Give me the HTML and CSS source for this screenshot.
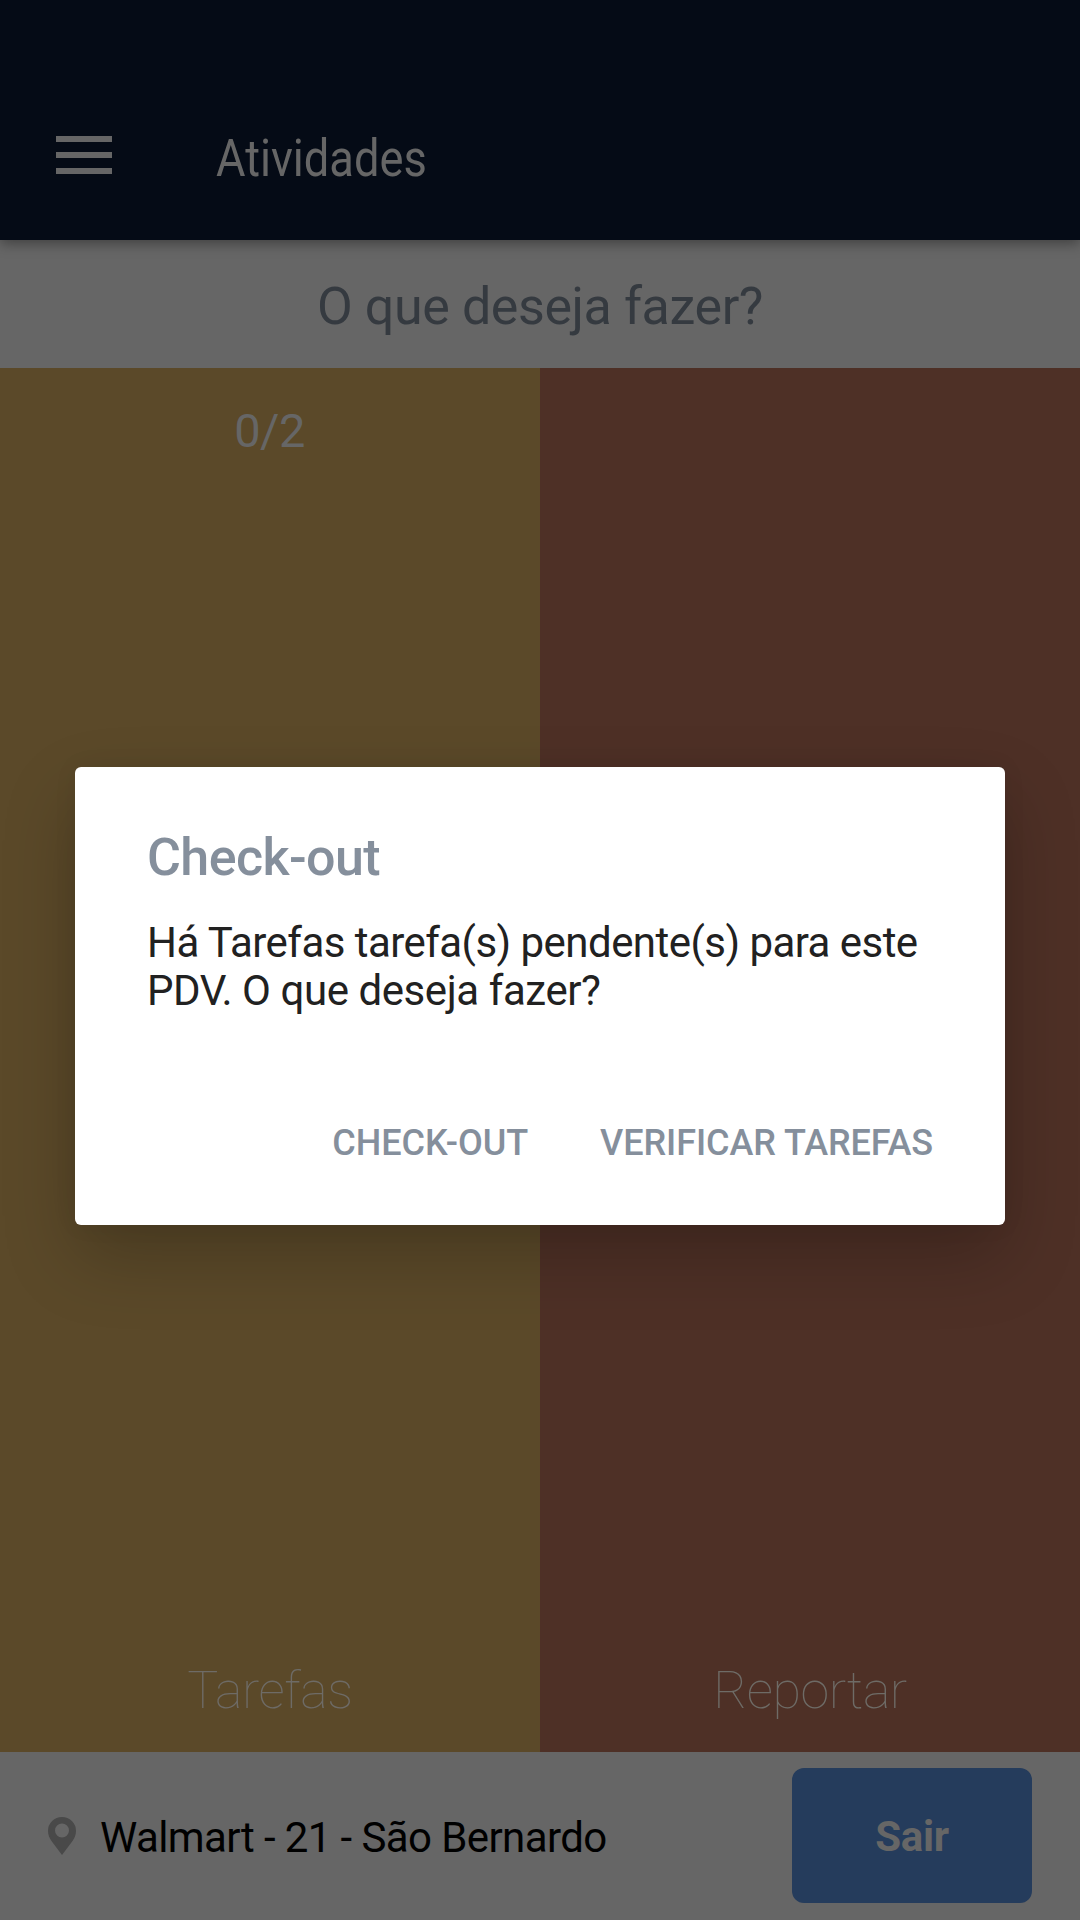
FILE: index.html
```html
<!DOCTYPE html>
<html lang="pt-BR">
<head>
<meta charset="utf-8">
<title>Atividades</title>
<link rel="stylesheet" href="styles.css">
</head>
<body>
<div class="screen">
  <header class="app-bar">
    <svg class="menu" viewBox="0 0 56 38"><path d="M0 0h56v6H0zM0 16h56v6H0zM0 32h56v6H0z"/></svg>
    <h1><span class="condensed">Atividades</span></h1>
  </header>
  <div class="question"><span>O que deseja fazer?</span></div>
  <main class="tiles">
    <section class="tile tasks"><span class="count">0/2</span><span class="label">Tarefas</span></section>
    <section class="tile report"><span class="label">Reportar</span></section>
  </main>
  <footer class="store">
    <svg class="pin" viewBox="0 0 28 38"><path fill-rule="evenodd" d="M14 0A14 14 0 0 0 0 14c0 4 1.500 7 3.500 10L14 38l10.500-14c2-3 3.500-6 3.500-10A14 14 0 0 0 14 0zm0 6.500a7 7 0 1 1 0 14 7 7 0 0 1 0-14z"/></svg>
    <span class="store-name">Walmart - 21 - São Bernardo</span>
    <button class="exit">Sair</button>
  </footer>
</div>
<div class="overlay">
  <div class="dialog" role="dialog">
    <h2>Check-out</h2>
    <p><span class="first-line">Há Tarefas tarefa(s) pendente(s) para este</span><br>PDV. O que deseja fazer?</p>
    <div class="actions"><button>CHECK-OUT</button><button>VERIFICAR TAREFAS</button></div>
  </div>
</div>
</body>
</html>
```
FILE: styles.css
```css
* { box-sizing: border-box; margin: 0; }
body { font-family: Roboto, sans-serif; background: #666; }
button { font: inherit; border: 0; padding: 0; background: none; }
.screen { width: 1080px; height: 1920px; display: flex; flex-direction: column; }
.app-bar { height: 240px; padding: 76px 56px 0; display: flex; align-items: center; background: #050b16; box-shadow: 0 4px 12px rgba(0,0,0,.35); position: relative; }
.menu { width: 56px; height: 38px; fill: #666; margin-bottom: 6px; }
h1 { margin-left: 104px; font-size: 52px; font-weight: 400; color: #666; }
.condensed { display: inline-block; transform: scaleX(.87); transform-origin: left; }
.question { height: 128px; padding-top: 4px; display: flex; align-items: center; justify-content: center; font-size: 52px; letter-spacing: -.41px; color: #353a40; }
.tiles { flex: 1; display: grid; grid-template-columns: 1fr 1fr; }
.tile { display: flex; flex-direction: column; align-items: center; padding: 35px 0 30px; color: #666; }
.tasks { background: #5b4929; }
.report { background: #4e3026; }
.count { font-size: 47px; letter-spacing: -.6px; margin-right: 1px; }
.label { margin-top: auto; font-size: 52px; font-weight: 100; line-height: 62px; letter-spacing: -.45px; color: #6e6b66; }
.store { height: 168px; display: flex; align-items: center; padding: 0 48px; background: #666; }
.pin { width: 28px; height: 38px; fill: #494949; }
.store-name { margin-left: 24px; padding-top: 3px; font-size: 42px; letter-spacing: -.6px; color: #000; }
.exit { margin: 0 0 1px auto; padding-top: 2px; width: 240px; height: 135px; border-radius: 12px; background: #253c5c; color: #666; font-size: 42px; font-weight: 700; letter-spacing: -.3px; }
.overlay { position: absolute; top: 0; left: 0; width: 1080px; height: 1920px; display: flex; justify-content: center; padding-top: 767px; }
.dialog { width: 930px; height: 458px; padding: 60px 72px; border-radius: 6px; background: #fff; box-shadow: 0 32px 72px rgba(0,0,0,.22), 0 0 24px rgba(0,0,0,.06); }
h2 { font-size: 52px; line-height: 62px; font-weight: 500; letter-spacing: -.6px; color: #858f9c; }
.dialog p { margin-top: 30px; font-size: 42px; line-height: 48px; letter-spacing: -.43px; color: #212121; white-space: nowrap; }
.first-line { letter-spacing: -.54px; }
.actions { display: flex; justify-content: flex-end; gap: 72px; margin-top: 107px; }
.actions button { font-size: 36px; line-height: 42px; font-weight: 500; letter-spacing: -.07px; color: #858f9c; white-space: nowrap; }
```
